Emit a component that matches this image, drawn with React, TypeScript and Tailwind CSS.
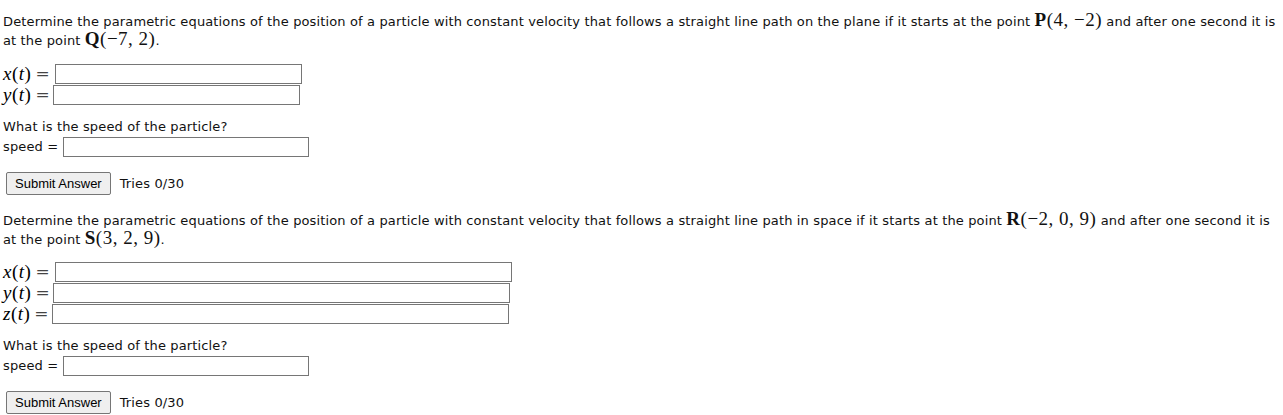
import React from 'react';

const sans = { fontFamily: '"DejaVu Sans", Verdana, sans-serif' };

const M: React.FC<{ children: React.ReactNode; className?: string }> = ({ children, className }) => (
  <span className={`font-['Liberation_Serif',serif] text-[19px] tracking-[0.5px] ${className ?? ''}`}>{children}</span>
);

const Point: React.FC<{ name: string; coords: string }> = ({ name, coords }) => (
  <M className="leading-[0]">
    <b>{name}</b>({coords})
  </M>
);

const EqRow: React.FC<{ v: string; w: string; gap: string }> = ({ v, w, gap }) => (
  <div className="flex h-[21px] items-center">
    <M className="leading-none">
      <i>{v}</i>(<i>t</i>)
    </M>
    <span className={`ml-[4px] font-['DejaVu_Serif',serif] text-[17px] leading-none font-light text-[#444] ${gap}`}>=</span>
    <input className={`h-[20px] border border-[#767676] bg-white ${w}`} />
  </div>
);

const Problem: React.FC<{
  where: string;
  start: React.ReactNode;
  end: React.ReactNode;
  vars: string[];
  w: string;
  eqTop: string;
}> = ({ where, start, end, vars, w, eqTop }) => (
  <div>
    <p className="text-[13px] leading-[19px] tracking-[0.14px] text-[#111]">
      Determine the parametric equations of the position of a particle with constant velocity that follows a straight
      line path {where} if it starts at the point {start} and after one second it is at the point {end}.
    </p>
    <div className={eqTop}>
      {vars.map((v, i) => (
        <EqRow key={v} v={v} w={w} gap={i === 0 ? 'mr-[5px]' : 'mr-[3px]'} />
      ))}
    </div>
    <p className="mt-[13px] text-[13px] leading-[18px] tracking-[0.14px] text-[#111]">
      What is the speed of the particle?
    </p>
    <div className="flex h-[21px] items-center text-[13px] tracking-[0.14px] text-[#111]">
      <span>speed =</span>
      <input className="ml-[5px] h-[20px] w-[246px] border border-[#767676] bg-white" />
    </div>
    <div className="mt-[15px] flex items-center">
      <button className="ml-[3px] h-[23px] rounded-[2px] border border-[#767676] bg-[#efefef] px-[8px] font-['Liberation_Sans',Arial,sans-serif] text-[13px] text-black">
        Submit Answer
      </button>
      <span className="ml-[9px] text-[13px] tracking-[0.14px] text-[#111]">Tries 0/30</span>
    </div>
  </div>
);

export default function App() {
  return (
    <div className="min-h-[415px] bg-white px-[3px] pt-[12px]" style={sans}>
      <Problem
        where="on the plane"
        start={<Point name="P" coords="4, −2" />}
        end={<Point name="Q" coords="−7, 2" />}
        vars={['x', 'y']}
        w="w-[247px]"
        eqTop="mt-[13px]"
      />
      <div className="mt-[16px]">
        <Problem
          where="in space"
          start={<Point name="R" coords="−2, 0, 9" />}
          end={<Point name="S" coords="3, 2, 9" />}
          vars={['x', 'y', 'z']}
          w="w-[457px]"
          eqTop="mt-[12px]"
        />
      </div>
    </div>
  );
}
